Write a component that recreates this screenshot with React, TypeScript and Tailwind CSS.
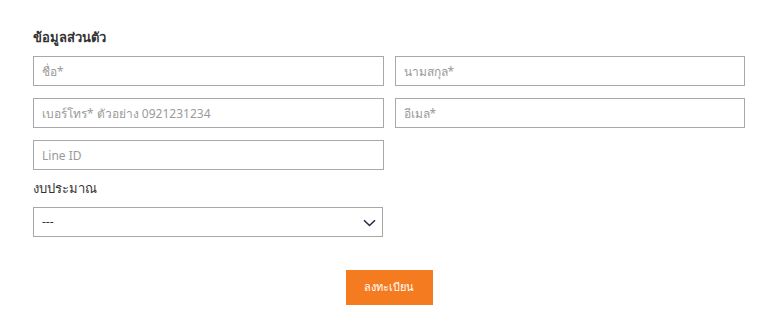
import React from 'react';

const fieldClass =
  'h-[30px] w-full border border-[#a8a8a8] bg-white px-2 text-[12px] text-[#333] placeholder:text-[#9a9a9a] outline-none';

export default function App() {
  return (
    <div
      className="min-h-[320px] w-[768px] bg-white pt-[29px] pl-[33px]"
      style={{ fontFamily: '"Noto Sans", "DejaVu Sans", sans-serif' }}
    >
      <div className="w-[712px]">
        {/* Personal info */}
        <h3 className="mb-[10px] text-[13px] font-semibold leading-[17px] text-[#333]">ข้อมูลส่วนตัว</h3>

        <div className="grid grid-cols-2 gap-x-[11px] gap-y-[12px]">
          <input className={fieldClass} placeholder="ชื่อ*" />
          <input className={fieldClass} placeholder="นามสกุล*" />
          <input className={fieldClass} placeholder="เบอร์โทร* ตัวอย่าง 0921231234" />
          <input className={fieldClass} placeholder="อีเมล*" />
          <input className={fieldClass} placeholder="Line ID" />
        </div>

        {/* Budget */}
        <div className="mt-[10px] mb-[10px] text-[13px] font-medium leading-[17px] text-[#333]">งบประมาณ</div>
        <div className="relative w-[350px]">
          <div className="flex h-[30px] w-full items-center border border-[#a8a8a8] bg-white px-2 text-[12px] text-[#333]">
            ---
          </div>
          <svg
            className="absolute right-[7px] top-[12px]"
            width="13"
            height="8"
            viewBox="0 0 13 8"
            fill="none"
          >
            <path d="M1 1.2L6.5 6.5L12 1.2" stroke="#1f2a44" strokeWidth="1.5" />
          </svg>
        </div>

        <div className="mt-[33px] flex justify-center">
          <button className="h-[35px] w-[87px] bg-[#f47b20] text-[11px] text-white">ลงทะเบียน</button>
        </div>
      </div>
    </div>
  );
}
